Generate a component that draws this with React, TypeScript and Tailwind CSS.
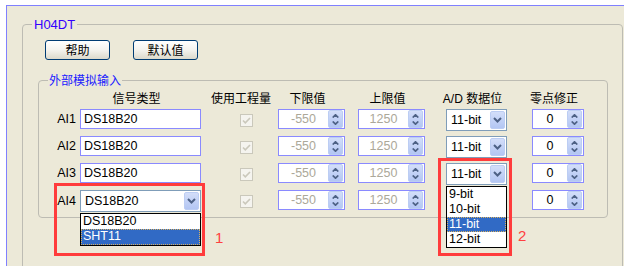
import React from "react";

const LAT = "font-['Liberation_Sans','Noto_Sans_CJK_SC',sans-serif]";
const CJK = "font-['Noto_Sans_CJK_SC',sans-serif]";

function SpinBtn() {
  return (
    <div className="w-[15px] h-[18px] mr-[1px] rounded-[2px] bg-linear-to-b from-[#d3def9] to-[#b3c6f3] border border-[#bccdf3] flex flex-col items-center justify-center gap-[3px]">
      <svg width="7" height="4" viewBox="0 0 7 4">
        <path d="M0.7 3.5 L3.5 0.8 L6.3 3.5" stroke="#4d6185" strokeWidth="1.7" fill="none" />
      </svg>
      <svg width="7" height="4" viewBox="0 0 7 4">
        <path d="M0.7 0.5 L3.5 3.2 L6.3 0.5" stroke="#4d6185" strokeWidth="1.7" fill="none" />
      </svg>
    </div>
  );
}

function ComboBtn() {
  return (
    <div className="w-[15px] h-[18px] mr-[1px] rounded-[2px] bg-linear-to-b from-[#d3def9] to-[#b3c6f3] border border-[#bccdf3] flex items-center justify-center">
      <svg width="9" height="6" viewBox="0 0 9 6">
        <path d="M1 1 L4.5 4.5 L8 1" stroke="#4d6185" strokeWidth="2" fill="none" />
      </svg>
    </div>
  );
}

function Spin({ value, disabled, w }: { value: string; disabled?: boolean; w: string }) {
  return (
    <div className={`${w} h-[20px] border border-[#8a8aff] bg-white flex items-center`}>
      <div className={`flex-1 text-center text-[12.5px] leading-[18px] ${LAT} ${disabled ? "text-[#aca899]" : "text-black"}`}>{value}</div>
      <SpinBtn />
    </div>
  );
}

function CheckBox() {
  return (
    <svg width="13" height="13" viewBox="0 0 13 13" className="block">
      <rect x="0.5" y="0.5" width="12" height="12" fill="#f5f4ef" stroke="#cac8bb" />
      <path d="M3 6.5 L5.3 8.8 L10 4" stroke="#cac8bb" strokeWidth="1.6" fill="none" />
    </svg>
  );
}

function AdCombo({ hidden }: { hidden?: boolean }) {
  if (hidden) return <div className="w-[61px] h-[22px]" />;
  return (
    <div className="w-[61px] h-[22px] border border-[#7f9db9] bg-white flex items-center">
      <div className={`flex-1 pl-[4px] text-[12.5px] leading-[18px] text-black ${LAT}`}>11-bit</div>
      <ComboBtn />
    </div>
  );
}

function Row({ n, combo }: { n: number; combo?: boolean }) {
  return (
    <div className="h-[27px] flex items-start">
      <div className={`w-[41px] h-[20px] pr-[4px] text-right text-[12.5px] leading-[20px] text-black ${LAT} ${combo ? "mt-[1px]" : ""}`}>AI{n}</div>
      {combo ? (
        <div className="w-[121px] h-[22px] border border-[#7f9db9] bg-white flex items-center">
          <div className={`flex-1 pl-[4px] text-[12.5px] leading-[18px] text-black ${LAT}`}>DS18B20</div>
          <ComboBtn />
        </div>
      ) : (
        <div className="w-[121px] h-[20px] border border-[#8a8aff] bg-white flex items-center">
          <div className={`pl-[3px] text-[12.5px] leading-[18px] text-black ${LAT}`}>DS18B20</div>
        </div>
      )}
      <div className="w-[77px] pl-[39px] pt-[5px]">
        <CheckBox />
      </div>
      <Spin value="-550" disabled w="w-[67px]" />
      <div className="w-[13px]" />
      <Spin value="1250" disabled w="w-[67px]" />
      <div className="w-[21px]" />
      <AdCombo hidden={combo} />
      <div className="w-[25px]" />
      <Spin value="0" w="w-[52px]" />
    </div>
  );
}

function XPButton({ label }: { label: string }) {
  return (
    <button className={`w-[65px] h-[20px] rounded-[3px] border border-[#003c74] bg-linear-to-b from-[#ffffff] via-[#f4f3ee] to-[#dcd9cb] text-[12px] leading-[18px] text-black ${CJK}`}>
      {label}
    </button>
  );
}

export default function App() {
  const headers: [string, string][] = [
    ["信号类型", "w-[121px] ml-[37px]"],
    ["使用工程量", "w-[77px] pl-[11px]"],
    ["下限值", "w-[67px]"],
    ["", "w-[13px]"],
    ["上限值", "w-[67px]"],
    ["", "w-[21px]"],
    ["A/D 数据位", "w-[61px]"],
    ["", "w-[25px]"],
    ["零点修正", "w-[52px]"],
  ];
  return (
    <div className="relative w-[627px] h-[271px] bg-white pt-[5px] pl-[6px] overflow-hidden">
      <div className="w-[618px] h-[261px] bg-[#ECE9D8] border-l border-t border-[#8080ff] overflow-hidden">
        <fieldset className="mt-[11px] ml-[15px] w-[601px] h-[300px] border border-[#bdbcb3] rounded-[4px]">
          <legend className={`ml-[9px] px-[2px] text-[13px] leading-[15px] text-[#3300ff] ${LAT}`}>H04DT</legend>
          <div className="mt-[8px] ml-[22px] flex gap-[23px]">
            <XPButton label="帮助" />
            <XPButton label="默认值" />
          </div>
          <fieldset className="mt-[13px] ml-[15px] w-[570px] h-[145px] border border-[#bdbcb3] rounded-[4px]">
            <legend className={`ml-[9px] px-[1px] text-[12px] leading-[14px] text-[#1a1aff] ${CJK}`}>外部模拟输入</legend>
            <div className="h-[22px] flex items-center">
              {headers.map(([t, c], i) => (
                <div key={i} className={`${c} shrink-0 text-center text-[12px] leading-[16px] text-black ${t.startsWith("A/D") ? LAT : CJK}`}>
                  {t.startsWith("A/D") ? (
                    <span>
                      <span className="text-[12px]">A/D</span> <span className={CJK}>数据位</span>
                    </span>
                  ) : (
                    t
                  )}
                </div>
              ))}
            </div>
            <Row n={1} />
            <Row n={2} />
            <Row n={3} />
            <Row n={4} combo />
          </fieldset>
        </fieldset>
      </div>

      {/* dropdown list 1 */}
      <div className={`absolute left-[80px] top-[213px] w-[121px] h-[33px] border border-black bg-white text-[12.5px] leading-[15px] ${LAT}`}>
        <div className="h-[15px] pl-[2px] text-black">DS18B20</div>
        <div className="h-[16px] pl-[2px] bg-[#316ac5] text-white outline-1 outline-dotted outline-[#d8b060] -outline-offset-1">SHT11</div>
      </div>

      {/* dropdown list 2 */}
      <div className={`absolute left-[446px] top-[186px] w-[61px] h-[62px] border border-black bg-white text-[12.5px] leading-[15px] ${LAT}`}>
        <div className="h-[15px] pl-[2px] text-black">9-bit</div>
        <div className="h-[15px] pl-[2px] text-black">10-bit</div>
        <div className="h-[15px] pl-[2px] bg-[#316ac5] text-white outline-1 outline-dotted outline-[#d8b060] -outline-offset-1">11-bit</div>
        <div className="h-[15px] pl-[2px] text-black">12-bit</div>
      </div>

      {/* annotations */}
      <div className="absolute left-[54px] top-[183px] w-[151px] h-[73px] border-[3px] border-[#ff3c3c]" />
      <div className="absolute left-[438px] top-[158px] w-[74px] h-[98px] border-[3px] border-[#ff3c3c]" />
      <div className={`absolute left-[215px] top-[229px] text-[15px] leading-[17px] text-[#ff4040] ${LAT}`}>1</div>
      <div className={`absolute left-[518px] top-[227px] text-[15px] leading-[17px] text-[#ff4040] ${LAT}`}>2</div>
    </div>
  );
}
